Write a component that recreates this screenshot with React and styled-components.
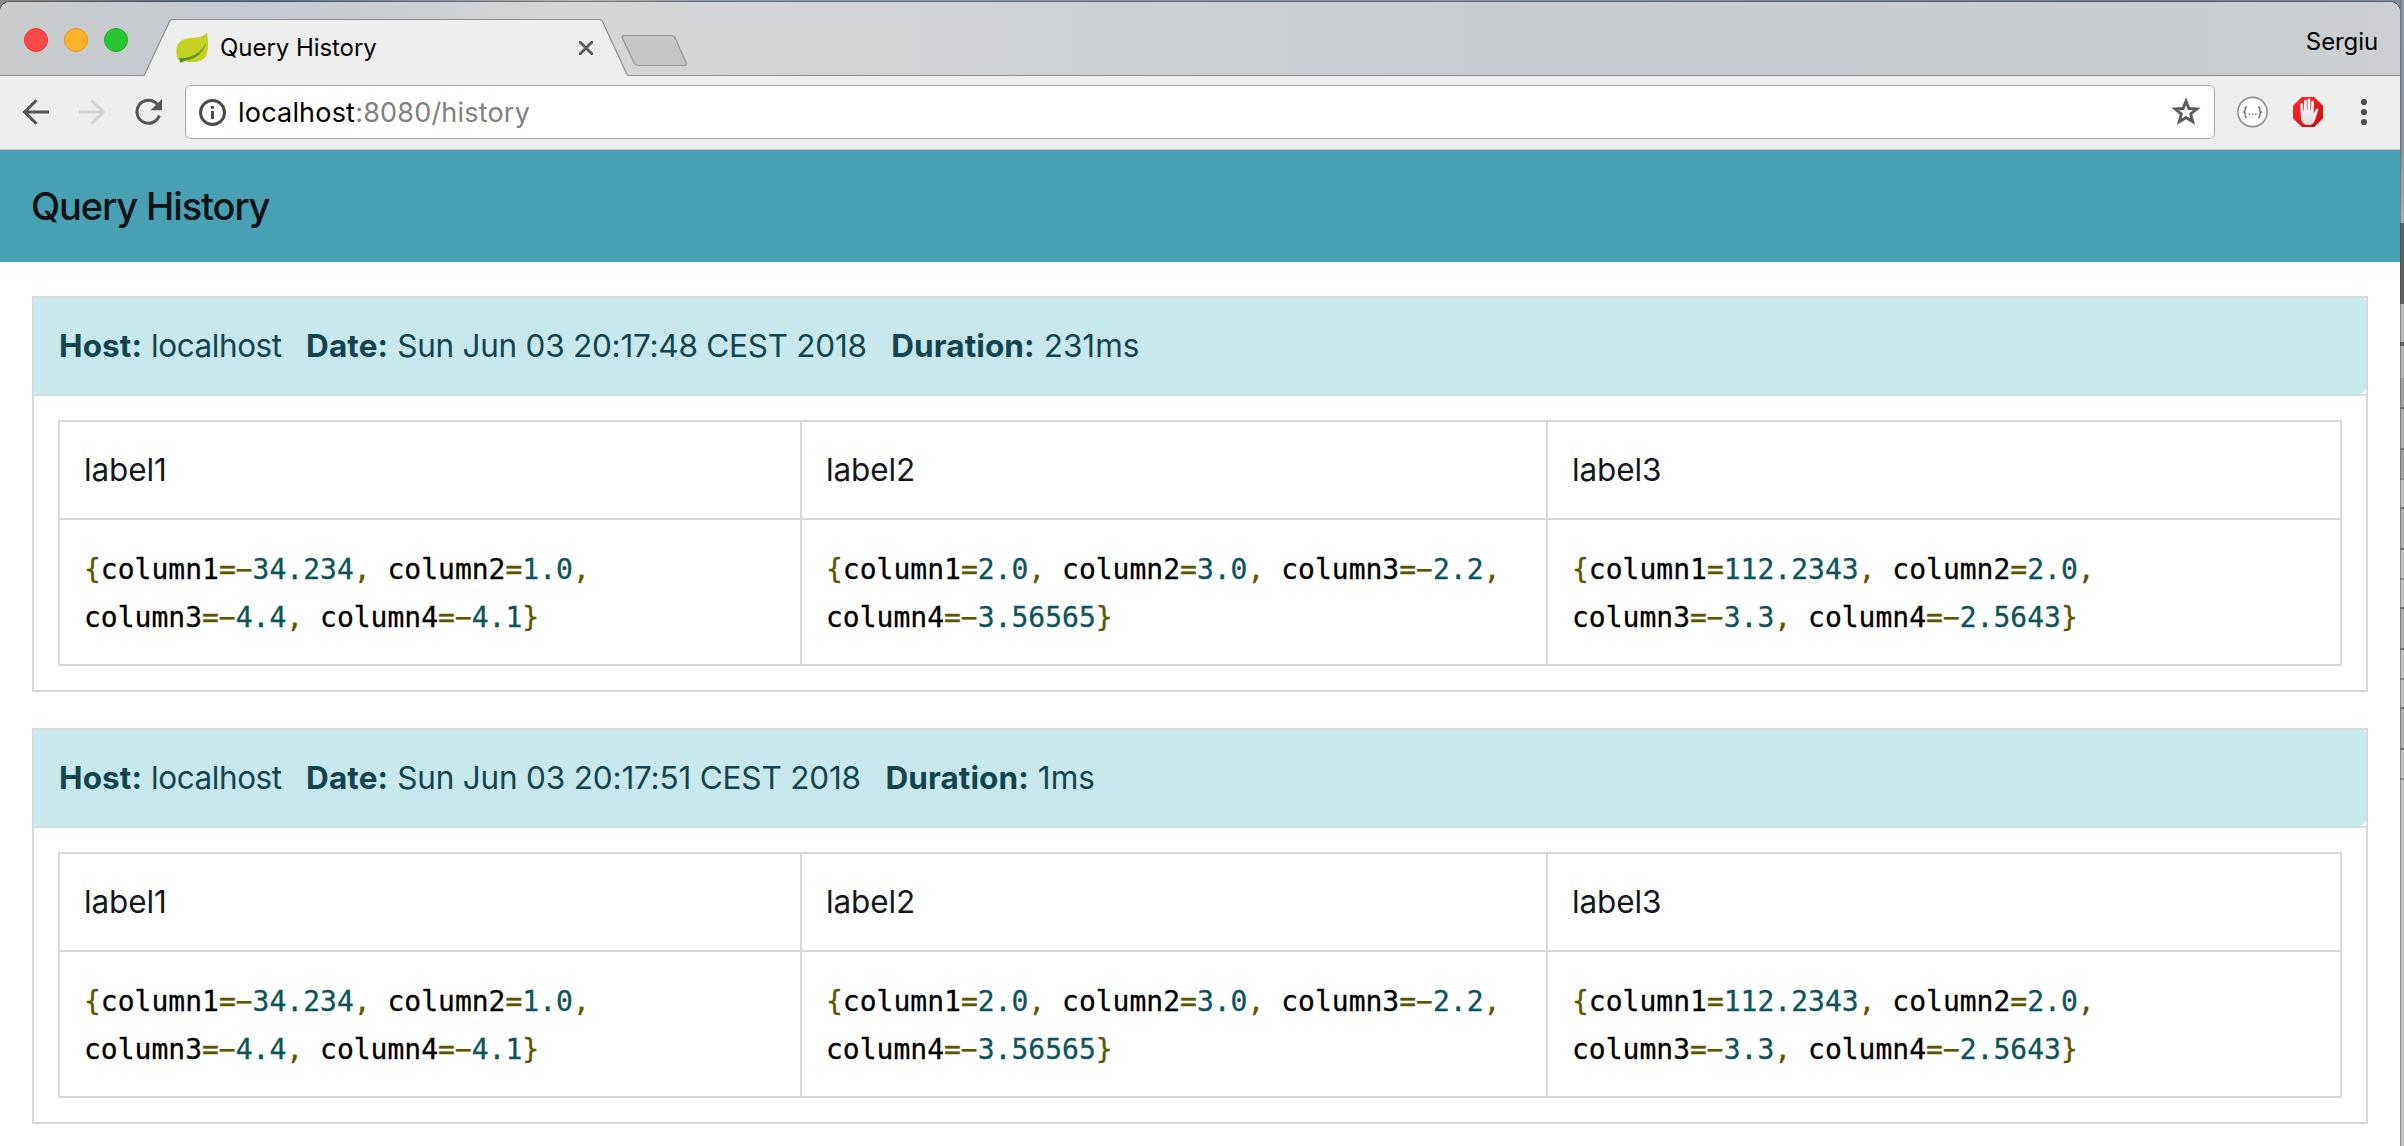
import React from "react";
import styled, { createGlobalStyle } from "styled-components";

const sans = `Inter, "Liberation Sans", sans-serif`;
const mono = `"DejaVu Sans Mono", "Liberation Mono", monospace`;
const line = "#d5dade";

const GlobalStyle = createGlobalStyle`
  *, *::before, *::after { box-sizing: border-box; }
  html, body { margin: 0; padding: 0; }
  body { width: 2404px; height: 1146px; overflow: hidden; font-family: ${sans}; }
  svg { display: block; flex: none; }
`;

const Desktop = styled.div`
  display: flex;
  width: 2404px;
  height: 1146px;
  background: linear-gradient(90deg, #848687 0, #6f7880 110px, #5f6f83 200px, #66778c 300px, #8e99a3 450px, #b9bab0 580px, #8b97a6 720px, #8795a5 1500px, #6d7a88 2150px, #828d98 2404px);
`;

const Window = styled.div`
  display: flex;
  flex-direction: column;
  width: 2400px;
  height: 1144px;
  margin-top: 2px;
  background: #fff;
  border-radius: 10px 10px 0 0;
  overflow: hidden;
  box-shadow: 0 0 0 1px rgba(60, 66, 74, 0.55);
`;

const TabStrip = styled.div`
  display: flex;
  align-items: flex-end;
  height: 74px;
  background: linear-gradient(90deg, #cacbcc 0, #c7cbcf 120px, #c5cad0 260px, #cdd0d3 440px, #d6d6d6 560px, #d2d4d6 800px, #c9cdd1 1500px, #c9cdd0 2150px, #cdcfd2 2400px);
  box-shadow: inset 0 -1px 0 #8f8f92;
`;

const Lights = styled.div`
  display: flex;
  gap: 16px;
  width: 143px;
  padding: 0 0 24px 24px;
`;

const Light = styled.span`
  width: 24px;
  height: 24px;
  border-radius: 50%;
  background: ${(p) => p.$fill};
  border: 1px solid ${(p) => p.$edge};
`;

const Tab = styled.div`
  position: relative;
  display: flex;
  align-items: center;
  width: 486px;
  height: 57px;
  padding: 0 36px 0 33px;
`;

const TabShape = styled.svg`
  position: absolute;
  left: 0;
  top: 0;
`;

const TabTitle = styled.span`
  position: relative;
  flex: 1;
  padding-left: 12px;
  font-size: 24px;
  line-height: 56px;
  letter-spacing: -0.05px;
  color: #000;
`;

const TabIcon = styled.span`
  position: relative;
`;

const NewTab = styled.div`
  padding: 0 0 8px;
  margin-left: -8px;
`;

const Profile = styled.span`
  margin-left: auto;
  padding: 0 22px 0 0;
  align-self: flex-start;
  font-size: 24px;
  line-height: 79px;
  letter-spacing: -0.1px;
  color: #000;
`;

const Toolbar = styled.div`
  display: flex;
  align-items: center;
  height: 74px;
  padding: 0 32px 2px 22px;
  background: #eee;
  border-bottom: 1px solid #cbcbcb;
`;

const NavIcons = styled.div`
  display: flex;
  align-items: center;
  gap: 28px;
  width: 163px;
`;

const AddressBar = styled.div`
  display: flex;
  align-items: center;
  flex: 1;
  height: 54px;
  padding: 0 13px 0 12px;
  background: #fff;
  border: 1px solid #a6a6a6;
  border-radius: 6px;
`;

const Url = styled.span`
  flex: 1;
  padding: 3px 0 0 12px;
  font-size: 27px;
  line-height: 50px;
  letter-spacing: 0.2px;
  color: #808080;
`;

const UrlHost = styled.span`
  color: #000;
`;

const Extensions = styled.div`
  display: flex;
  align-items: center;
  gap: 24px;
  padding-left: 22px;
`;

const MenuButton = styled.span`
  padding-left: 13px;
`;

const PageHeader = styled.header`
  display: flex;
  align-items: center;
  height: 112px;
  padding: 0 31px;
  background: #48a0b4;
`;

const Title = styled.h1`
  margin: 0;
  font-size: 38px;
  font-weight: 500;
  line-height: 56px;
  letter-spacing: -1.1px;
  color: #081114;
`;

const Records = styled.main`
  display: flex;
  flex-direction: column;
  gap: 36px;
  padding: 34px 32px 0;
`;

const Card = styled.section`
  border: 2px solid ${line};
`;

const CardHeader = styled.div`
  border-bottom: 2px solid ${line};
`;

const CardSummary = styled.div`
  display: flex;
  gap: 24.5px;
  height: 96px;
  padding: 0 25px;
  background: #c7e8ec;
  border-radius: 2px 4px 7px 3px;
  font-size: 31.5px;
  line-height: 96px;
  color: #10454f;
`;

const Field = styled.span`
  display: flex;
  gap: 9px;
`;

const FieldName = styled.b`
  font-weight: 700;
  letter-spacing: 0.1px;
`;

const FieldValue = styled.span`
  letter-spacing: ${(p) => p.$spacing || 0}px;
`;

const CardBody = styled.div`
  padding: 24px;
`;

const Grid = styled.div`
  display: grid;
  grid-template-columns: 740px 744px 1fr;
  grid-template-rows: 96px 144px;
  gap: 2px;
  padding: 2px;
  background: ${line};
`;

const Cell = styled.div`
  padding: 24px;
  background: #fff;
  font-size: 31.5px;
  line-height: 48px;
  letter-spacing: -0.1px;
  color: #15181b;
`;

const Code = styled.code`
  font-family: ${mono};
  font-size: 28px;
  line-height: 1;
  letter-spacing: 0;
  color: #000;
  -webkit-text-stroke: 0.3px currentColor;
`;

const Entry = styled.span`
  white-space: nowrap;
`;

const Punct = styled.span`
  color: #5b5700;
`;

const Num = styled.span`
  color: #0c5457;
`;

const Backdrop = styled.div`
  display: flex;
  flex-direction: column;
  width: 4px;
`;

const Strip = styled.span`
  height: ${(p) => p.$h}px;
  background: ${(p) => p.$bg};
  box-shadow: inset 1px 0 0 rgba(60, 60, 60, 0.4);
`;

const BackdropField = styled(Strip)`
  border: 2px solid #707070;
  border-left: 0;
  border-right: 0;
`;

function Leaf() {
  return (
    <svg width="32" height="32" viewBox="0 0 32 32">
      <path d="M31 0.500C32.500 8 32.500 17 30.500 23C27.500 30 18 31 10 29.500C8 29 6.500 29.500 4.500 30.500C1 27 0 23 0.500 17C1 10 7 6.500 15 6C22 5.500 28 5 31 0.500Z" fill="#c4d023" />
      <path d="M30.500 9C28 18 20 25 4 26.500L4.500 31C6.500 29.500 8 29 10 28.500C20 27.500 28.500 20 30.500 9Z" fill="#5c971f" />
      <path d="M3.500 25.500L8.500 27.500L4.500 31Z" fill="#3f8f3a" />
    </svg>
  );
}

function Cross() {
  return (
    <svg width="14" height="14" viewBox="0 0 14 14">
      <path d="M1 1L13 13M13 1L1 13" stroke="#5a5a5a" strokeWidth="2.800" strokeLinecap="round" />
    </svg>
  );
}

function Arrow({ color, flip }) {
  return (
    <svg width="28" height="28" viewBox="0 0 28 28">
      <path
        d="M27 14H3M14.500 2.200L2.700 14L14.500 25.800"
        transform={flip ? "matrix(-1 0 0 1 28 0)" : undefined}
        fill="none"
        stroke={color}
        strokeWidth="3"
      />
    </svg>
  );
}

function Reload() {
  return (
    <svg width="28" height="28" viewBox="0 0 28 28">
      <path d="M25.300 17.500A11.500 11.500 0 1 1 23.300 6.400" fill="none" stroke="#555" strokeWidth="3" />
      <path d="M28 1V12.300H16.700Z" fill="#555" />
    </svg>
  );
}

function Info() {
  return (
    <svg width="28" height="28" viewBox="0 0 28 28">
      <circle cx="14.500" cy="14.500" r="12" fill="none" stroke="#4a4a4a" strokeWidth="3" />
      <path d="M13 8H16V10.800H13ZM13 13H16V21H13Z" fill="#4a4a4a" />
    </svg>
  );
}

function Star() {
  return (
    <svg width="30" height="30" viewBox="0 0 30 30">
      <path d="M15 4.200L17.900 11.500L25.800 12L19.700 17L21.700 24.700L15 20.500L8.300 24.700L10.300 17L4.200 12L12.100 11.500Z" fill="none" stroke="#5a5a5a" strokeWidth="2.900" />
    </svg>
  );
}

function Braces() {
  return (
    <svg width="32" height="32" viewBox="0 0 32 32">
      <circle cx="15.500" cy="16" r="14.600" fill="#fff" stroke="#8f8f8f" strokeWidth="1.600" />
      <path d="M10 11C8 11 8.200 12 8.200 13.700C8.200 15.300 7.800 16 6.200 16C7.800 16 8.200 16.700 8.200 18.300C8.200 20.500 8 21.500 10 21.500M21 11C23 11 22.800 12 22.800 13.700C22.800 15.300 23.200 16 24.800 16C23.200 16 22.800 16.700 22.800 18.300C22.800 20.500 23 21.500 21 21.500" fill="none" stroke="#6a6a6a" strokeWidth="1.300" />
      <path d="M11.500 17.500h1.500v1.500h-1.500zM14.800 17.500h1.500v1.500h-1.500zM18.100 17.500h1.500v1.500h-1.500z" fill="#777" />
    </svg>
  );
}

function StopHand() {
  return (
    <svg width="30" height="30" viewBox="0 0 30 30">
      <defs>
        <linearGradient id="stop-red" x1="0" y1="0" x2="1" y2="1">
          <stop offset="0" stopColor="#ff2b2b" />
          <stop offset="1" stopColor="#cc0808" />
        </linearGradient>
        <linearGradient id="palm" x1="0" y1="0" x2="0" y2="1">
          <stop offset="0" stopColor="#fff" />
          <stop offset="1" stopColor="#dedede" />
        </linearGradient>
      </defs>
      <path d="M8.800 0H21.200L30 8.800V21.200L21.200 30H8.800L0 21.200V8.800Z" fill="url(#stop-red)" />
      <path d="M7.300 7.500C7.300 5.600 9.900 5.600 10 7.500L10.400 13.500H10.900L11 4.200C11.100 2.200 13.700 2.200 13.700 4.200L13.900 13H14.400L14.600 3C14.700 1.100 17.200 1.100 17.300 3L17.400 13.200H17.900L18.300 5C18.500 3.200 20.900 3.300 20.900 5.200L20.800 16.500C21.500 15 22.200 13.300 23 12.200C24 10.900 25.800 11.500 25.200 13.200C24 16.600 23 20.500 21.800 23.500C20.700 26.500 18.700 28 15.200 28C10.500 28 8 25 7.800 20Z" fill="url(#palm)" />
    </svg>
  );
}

function MenuDots() {
  return (
    <svg width="8" height="28" viewBox="0 0 8 28">
      <circle cx="4" cy="4" r="3.100" fill="#4c4c4c" />
      <circle cx="4" cy="14" r="3.100" fill="#4c4c4c" />
      <circle cx="4" cy="24" r="3.100" fill="#4c4c4c" />
    </svg>
  );
}

function CodeMap({ values }) {
  const last = values.length - 1;
  return (
    <Code>
      {values.map((value, i) => (
        <React.Fragment key={i}>
          <Entry>
            {i === 0 && <Punct>{"{"}</Punct>}
            {`column${i + 1}`}
            <Punct>{value.startsWith("−") ? "=−" : "="}</Punct>
            <Num>{value.replace("−", "")}</Num>
            <Punct>{i < last ? "," : "}"}</Punct>
          </Entry>
          {i < last && " "}
        </React.Fragment>
      ))}
    </Code>
  );
}

const columns = [
  { label: "label1", values: ["−34.234", "1.0", "−4.4", "−4.1"] },
  { label: "label2", values: ["2.0", "3.0", "−2.2", "−3.56565"] },
  { label: "label3", values: ["112.2343", "2.0", "−3.3", "−2.5643"] },
];

const records = [
  { host: "localhost", date: "Sun Jun 03 20:17:48 CEST 2018", duration: "231ms", dateSpacing: -0.25 },
  { host: "localhost", date: "Sun Jun 03 20:17:51 CEST 2018", duration: "1ms", dateSpacing: -0.18 },
];

function RecordCard({ record }) {
  return (
    <Card>
      <CardHeader>
        <CardSummary>
          <Field>
            <FieldName>Host:</FieldName>
            <FieldValue $spacing={-0.45}>{record.host}</FieldValue>
          </Field>
          <Field>
            <FieldName>Date:</FieldName>
            <FieldValue $spacing={record.dateSpacing}>{record.date}</FieldValue>
          </Field>
          <Field>
            <FieldName>Duration:</FieldName>
            <FieldValue>{record.duration}</FieldValue>
          </Field>
        </CardSummary>
      </CardHeader>
      <CardBody>
        <Grid>
          {columns.map((c) => (
            <Cell key={c.label}>{c.label}</Cell>
          ))}
          {columns.map((c) => (
            <Cell key={c.label}>
              <CodeMap values={c.values} />
            </Cell>
          ))}
        </Grid>
      </CardBody>
    </Card>
  );
}

export default function App() {
  return (
    <Desktop>
      <GlobalStyle />
      <Window>
        <TabStrip>
          <Lights>
            <Light $fill="#fd4948" $edge="#df3a3a" />
            <Light $fill="#feb429" $edge="#dd941f" />
            <Light $fill="#28c732" $edge="#1ba526" />
          </Lights>
          <Tab>
            <TabShape width="486" height="57" viewBox="0 0 486 57">
              <path d="M0 57L1.500 55.500L26.500 2.500Q27.500 0.500 29.500 0.500H456.500Q458.500 0.500 459.500 2.500L483.500 54.500Q484.500 56.500 486 56.500V57Z" fill="#eee" />
              <path d="M0 56.500Q1 56.500 1.800 55L26.500 2.500Q27.500 0.500 29.500 0.500H456.500Q458.500 0.500 459.500 2.500L483.500 54.500Q484.500 56.500 486 56.500" fill="none" stroke="#8f8f92" strokeWidth="1.200" />
            </TabShape>
            <TabIcon><Leaf /></TabIcon>
            <TabTitle>Query History</TabTitle>
            <TabIcon><Cross /></TabIcon>
          </Tab>
          <NewTab>
            <svg width="66" height="34" viewBox="0 0 66 34">
              <path d="M3.500 1.500H51Q53 1.500 54 3.500L65 28.500Q66 31.500 63.500 31.500H17.500Q14.500 31.500 13 29L1.500 4Q0.500 1.500 3.500 1.500Z" fill="#c5c5c5" stroke="#959595" strokeWidth="1.200" />
            </svg>
          </NewTab>
          <Profile>Sergiu</Profile>
        </TabStrip>
        <Toolbar>
          <NavIcons>
            <Arrow color="#555" />
            <Arrow color="#cfcfcf" flip />
            <Reload />
          </NavIcons>
          <AddressBar>
            <Info />
            <Url>
              <UrlHost>localhost</UrlHost>:8080/history
            </Url>
            <Star />
          </AddressBar>
          <Extensions>
            <Braces />
            <StopHand />
            <MenuButton>
              <MenuDots />
            </MenuButton>
          </Extensions>
        </Toolbar>
        <PageHeader>
          <Title>Query History</Title>
        </PageHeader>
        <Records>
          {records.map((record) => (
            <RecordCard key={record.date} record={record} />
          ))}
        </Records>
      </Window>
      <Backdrop>
        <Strip $h={150} $bg="linear-gradient(#8b97a5, #8b939d)" />
        <Strip $h={73} $bg="linear-gradient(#8b939d, #b0adab)" />
        <Strip $h={81} $bg="#606060" />
        <Strip $h={38} $bg="#bababa" />
        <Strip $h={4} $bg="#646464" />
        <Strip $h={32} $bg="#b4b4b4" />
        <Strip $h={29} $bg="#a0a0a0" />
        <BackdropField $h={43} $bg="#b0b0b0" />
        <Strip $h={28} $bg="#a0a0a0" />
        {[0, 1, 2].map((row) => (
          <React.Fragment key={row}>
            <Strip $h={2} $bg="#8b8b8b" />
            <Strip $h={27} $bg="#c2c2c2" />
            <BackdropField $h={43} $bg="#b0b0b0" />
            <Strip $h={28} $bg="#c2c2c2" />
          </React.Fragment>
        ))}
        <Strip $h={2} $bg="#8b8b8b" />
        <Strip $h={366} $bg="#c4c4c4" />
      </Backdrop>
    </Desktop>
  );
}
